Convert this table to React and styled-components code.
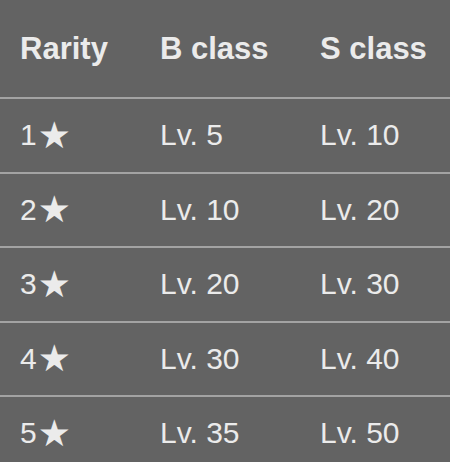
import React from "react";
import styled, { createGlobalStyle } from "styled-components";

const rows = [
    { stars: 1, b: 5, s: 10 },
    { stars: 2, b: 10, s: 20 },
    { stars: 3, b: 20, s: 30 },
    { stars: 4, b: 30, s: 40 },
    { stars: 5, b: 35, s: 50 },
];

const GlobalStyle = createGlobalStyle`
    html, body {
        margin: 0;
        background: #636363;
    }
`;

const Table = styled.div`
    width: 450px;
    min-height: 462px;
    background: #636363;
    color: #ebebeb;
    font-family: "Liberation Sans", Arial, sans-serif;
    font-size: 30px;
`;

const Row = styled.div`
    display: grid;
    grid-template-columns: 140px 160px 1fr;
    align-items: center;
    padding-left: 20px;
    height: ${(p) => (p.$header ? "97px" : "72.5px")};
    border-bottom: 2px solid #a3a3a3;
    font-weight: ${(p) => (p.$header ? 700 : 400)};
    font-size: ${(p) => (p.$header ? "31px" : "30px")};

    &:last-child {
        border-bottom: none;
    }
`;

const Cell = styled.div`
    display: flex;
    align-items: center;
    white-space: nowrap;
`;

const Star = styled.span`
    font-family: "DejaVu Sans", sans-serif;
    font-size: 37px;
    line-height: 1;
    margin-left: 1px;
`;

const App = () => {
    return (
        <>
            <GlobalStyle />
            <Table>
                <Row $header>
                    <Cell>Rarity</Cell>
                    <Cell>B class</Cell>
                    <Cell>S class</Cell>
                </Row>
                {rows.map((r) => (
                    <Row key={r.stars}>
                        <Cell>
                            {r.stars}
                            <Star>★</Star>
                        </Cell>
                        <Cell>Lv. {r.b}</Cell>
                        <Cell>Lv. {r.s}</Cell>
                    </Row>
                ))}
            </Table>
        </>
    );
};

export default App;
